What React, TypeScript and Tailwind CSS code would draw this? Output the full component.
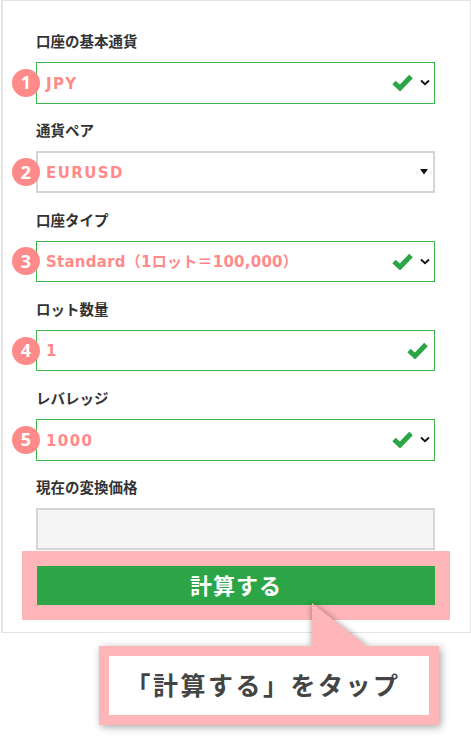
import React from 'react';

const jp = { fontFamily: '"Open Sans", "Noto Sans CJK JP", sans-serif' };
const latin = { fontFamily: '"DejaVu Sans", "Noto Sans CJK JP", sans-serif' };

type Field = {
    no: number;
    label: string;
    value: string;
    tracking: string;
    ok?: boolean;
    arrow?: 'chevron' | 'triangle';
};

const fields: Field[] = [
    { no: 1, label: '口座の基本通貨', value: 'JPY', tracking: 'tracking-[1.4px]', ok: true, arrow: 'chevron' },
    { no: 2, label: '通貨ペア', value: 'EURUSD', tracking: 'tracking-[1.4px]', arrow: 'triangle' },
    { no: 3, label: '口座タイプ', value: 'Standard（1ロット＝100,000）', tracking: 'tracking-[0.25px]', ok: true, arrow: 'chevron' },
    { no: 4, label: 'ロット数量', value: '1', tracking: 'tracking-[1.4px]', ok: true },
    { no: 5, label: 'レバレッジ', value: '1000', tracking: 'tracking-[1.4px]', ok: true, arrow: 'chevron' },
];

function Check({ className }: { className: string }) {
    return (
        <svg width="21" height="17" viewBox="0 0 21 17" className={className}>
            <path d="M2 8.5 8 14 19 2.5" fill="none" stroke="#2ba545" strokeWidth="5" />
        </svg>
    );
}

function Row({ no, label, value, tracking, ok, arrow }: Field) {
    return (
        <div className="h-[89.3px]">
            <div className="h-5 mb-2.5 text-[14.5px] leading-5 font-bold text-[#333]">{label}</div>
            <div className={`relative flex items-center h-[41.5px] bg-white ${ok ? 'border border-[#3db54a] pl-[9px]' : 'border-2 border-[#d6d6d6] pl-[8px]'}`}>
                <span className={`absolute top-1/2 -translate-y-1/2 w-7 h-7 rounded-full bg-[#ff8a8a] text-white text-[18px] font-bold flex items-center justify-center ${ok ? '-left-[25px]' : '-left-[26px]'}`}>
                    {no}
                </span>
                <span className={`flex-1 pt-0.5 text-[15px] font-bold text-[#ff8a8a] ${tracking}`} style={latin}>{value}</span>
                {ok && <Check className={arrow ? 'mr-[7px]' : 'mr-[6px]'} />}
                {arrow === 'chevron' && (
                    <svg width="10" height="7" viewBox="0 0 10 7" className="mr-[4px]">
                        <path d="M1 1.5 5 5.2 9 1.5" fill="none" stroke="#111" strokeWidth="1.8" />
                    </svg>
                )}
                {arrow === 'triangle' && (
                    <svg width="8" height="6" viewBox="0 0 8 6" className="mr-[5px]">
                        <path d="M0 0H8L4 5.5Z" fill="#111" />
                    </svg>
                )}
            </div>
        </div>
    );
}

export default function App() {
    return (
        <div className="w-[471px] h-[745px] bg-white relative overflow-hidden" style={jp}>
            <div className="ml-px w-[470px] h-[633px] border border-[#e4e4e4] border-l-2 pt-[30px] pl-[33px] pr-[35px]">
                {fields.map(f => (
                    <div key={f.label} className="pt-px -mb-px">
                        <Row {...f} />
                    </div>
                ))}
                <div className="pt-px h-5 mb-[11px] text-[14.5px] leading-5 font-bold text-[#333]">現在の変換価格</div>
                <div className="h-[41.5px] bg-[#f5f5f5] border-2 border-[#d6d6d6]"></div>
                <div className="-ml-[14px] -mr-[15px] mt-px border-[15px] border-[#ffb6b8]">
                    <div className="h-[39px] bg-[#2ba545] text-white text-[22px] font-bold tracking-[1px] flex items-center justify-center">
                        計算する
                    </div>
                </div>
            </div>

            {/* callout */}
            <div className="absolute left-[99px] top-[646px] w-[340px] h-[79px] border-[10px] border-[#ffb6b8] bg-white shadow-[2px_2px_8px_rgba(0,0,0,0.35)] pr-3 flex items-center justify-center text-[25px] font-bold text-[#444] tracking-[2.5px]">
                「計算する」をタップ
            </div>
            <svg className="absolute left-[306px] top-[600px]" width="70" height="46" viewBox="0 0 70 46">
                <path d="M6 3V47H62Z" fill="#ffb6b8" className="drop-shadow-[0_0_3px_rgba(0,0,0,0.4)]" />
            </svg>
        </div>
    );
}
